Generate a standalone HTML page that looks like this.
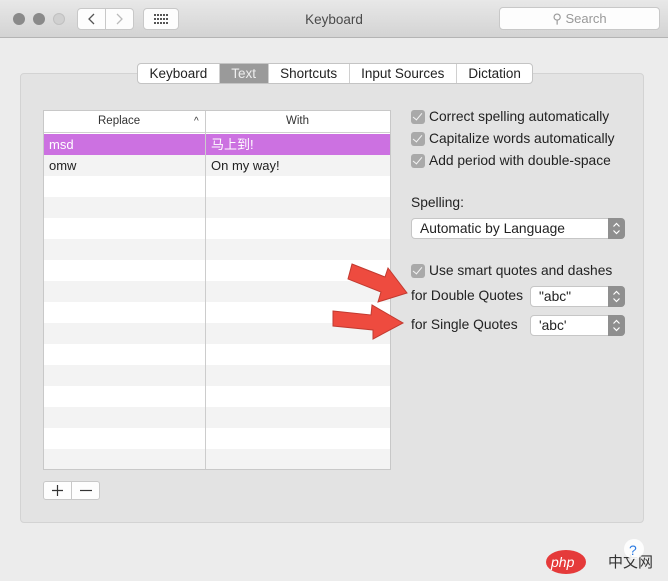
<!DOCTYPE html>
<html><head><meta charset="utf-8"><style>
*{margin:0;padding:0;box-sizing:border-box}
body{width:668px;height:581px;background:#ececec;font-family:"Liberation Sans","Noto Sans CJK SC",sans-serif;font-size:13px;color:#222;position:relative;overflow:hidden}
.abs{position:absolute}
.title{left:0;top:0;width:668px;height:38px;background:linear-gradient(#e8e8e8,#d3d3d3);border-bottom:1px solid #b4b4b4}
.dot{width:12px;height:12px;border-radius:50%;top:13px;background:#8a8a8a}
.btn{background:#fdfdfd;border:1px solid #c8c8c8;border-radius:4px}
.panel{left:20px;top:73px;width:624px;height:450px;background:#e3e3e3;border:1px solid #d3d3d3;border-radius:4px}
.tabs{left:137px;top:63px;height:21px;display:flex;border:1px solid #c4c4c4;border-radius:4px;background:#fff;overflow:hidden}
.tabs div{padding:0 11.5px;line-height:19px;border-right:1px solid #d0d0d0;font-size:13.5px}
.tabs div:last-child{border-right:none}
.tabs .sel{background:#9a9a9a;color:#eee}
.table{left:43px;top:110px;width:348px;height:360px;border:1px solid #c8c8c8;background:#fff}
.row{position:absolute;left:0;width:346px;height:21px;line-height:21px}
.cb{width:14px;height:14px;border-radius:3px;background:#a9a9a9;left:411px}
.cb::after{content:"";position:absolute;left:4px;top:1px;width:4px;height:8px;border:solid #f4f4f4;border-width:0 1.5px 1.5px 0;transform:rotate(40deg)}
.lbl{left:429px;font-size:13.8px}
.pop{background:#fff;border:1px solid #c6c6c6;border-radius:4px;height:21px;line-height:19px;padding-left:8px;font-size:13.8px}
.pop .ar{position:absolute;right:-1px;top:-1px;width:17px;height:21px;background:#8f8f8f;border-radius:0 4px 4px 0}
</style></head><body>
<div class="abs title"></div>
<div class="abs dot" style="left:13px"></div>
<div class="abs dot" style="left:33px"></div>
<div class="abs dot" style="left:53px;background:#d0d0d0;border:1px solid #c0c0c0"></div>
<div class="abs btn" style="left:77px;top:8px;width:57px;height:22px"></div>
<div class="abs" style="left:105px;top:8px;width:1px;height:22px;background:#c8c8c8"></div>
<svg class="abs" style="left:77px;top:8px" width="57" height="22"><path d="M17 6 L12 11 L17 16" stroke="#555" fill="none" stroke-width="1.3"/><path d="M40 6 L45 11 L40 16" stroke="#bbb" fill="none" stroke-width="1.3"/></svg>
<div class="abs btn" style="left:143px;top:8px;width:36px;height:22px"></div>
<svg class="abs" style="left:143px;top:8px" width="36" height="22"><g fill="#555"><rect x="11" y="6" width="2" height="2"/><rect x="14" y="6" width="2" height="2"/><rect x="17" y="6" width="2" height="2"/><rect x="20" y="6" width="2" height="2"/><rect x="23" y="6" width="2" height="2"/><rect x="11" y="10" width="2" height="2"/><rect x="14" y="10" width="2" height="2"/><rect x="17" y="10" width="2" height="2"/><rect x="20" y="10" width="2" height="2"/><rect x="23" y="10" width="2" height="2"/><rect x="11" y="14" width="2" height="2"/><rect x="14" y="14" width="2" height="2"/><rect x="17" y="14" width="2" height="2"/><rect x="20" y="14" width="2" height="2"/><rect x="23" y="14" width="2" height="2"/></g></svg>
<div class="abs" style="left:0;width:668px;top:12px;text-align:center;color:#4a4a4a;font-size:13.5px">Keyboard</div>
<div class="abs btn" style="left:499px;top:7px;width:161px;height:23px;text-align:center;line-height:21px;color:#999;font-size:13px">&#9906; Search</div>
<div class="abs panel"></div>
<div class="abs tabs"><div>Keyboard</div><div class="sel">Text</div><div>Shortcuts</div><div>Input Sources</div><div>Dictation</div></div>
<div class="abs table">
<div class="row" style="top:0;height:22px;border-bottom:1px solid #d0d0d0;font-size:11.5px;color:#333"><span style="position:absolute;left:54px">Replace</span><span style="position:absolute;left:150px;font-size:10px">^</span><span style="position:absolute;left:242px">With</span></div>
<div class="row" style="top:23px;background:#cc71e1;color:#fff"><span style="position:absolute;left:5px">msd</span><span style="position:absolute;left:167px">马上到!</span></div>
<div class="row" style="top:44px;background:#f3f3f3"><span style="position:absolute;left:5px">omw</span><span style="position:absolute;left:167px">On my way!</span></div>
<div class="row" style="top:86px;background:#f3f3f3"></div>
<div class="row" style="top:128px;background:#f3f3f3"></div>
<div class="row" style="top:170px;background:#f3f3f3"></div>
<div class="row" style="top:212px;background:#f3f3f3"></div>
<div class="row" style="top:254px;background:#f3f3f3"></div>
<div class="row" style="top:296px;background:#f3f3f3"></div>
<div class="row" style="top:338px;background:#f3f3f3;height:20px"></div>
<div style="position:absolute;left:161px;top:0;width:1px;height:358px;background:#ccc"></div>
</div>
<div class="abs btn" style="left:43px;top:481px;width:57px;height:19px;border-radius:3px"></div>
<div class="abs" style="left:71px;top:481px;width:1px;height:19px;background:#c8c8c8"></div>
<svg class="abs" style="left:43px;top:481px" width="57" height="19"><path d="M9 9.5H20M14.5 4V15M80 0" stroke="#333" stroke-width="1.2"/><path d="M37 9.5H49" stroke="#333" stroke-width="1.2"/></svg>
<div class="abs cb" style="top:110px"></div><div class="abs lbl" style="top:109px">Correct spelling automatically</div>
<div class="abs cb" style="top:132px"></div><div class="abs lbl" style="top:131px">Capitalize words automatically</div>
<div class="abs cb" style="top:154px"></div><div class="abs lbl" style="top:153px">Add period with double-space</div>
<div class="abs" style="left:411px;top:195px;font-size:13.8px">Spelling:</div>
<div class="abs pop" style="left:411px;top:218px;width:214px">Automatic by Language<div class="ar"><svg width="17" height="21"><path d="M5.5 8.5L8.5 5.5L11.5 8.5M5.5 12.5L8.5 15.5L11.5 12.5" stroke="#fff" fill="none" stroke-width="1.2"/></svg></div></div>
<div class="abs cb" style="top:264px"></div><div class="abs lbl" style="top:263px">Use smart quotes and dashes</div>
<div class="abs" style="left:411px;top:288px;font-size:13.8px">for Double Quotes</div>
<div class="abs pop" style="left:530px;top:286px;width:95px">"abc"<div class="ar"><svg width="17" height="21"><path d="M5.5 8.5L8.5 5.5L11.5 8.5M5.5 12.5L8.5 15.5L11.5 12.5" stroke="#fff" fill="none" stroke-width="1.2"/></svg></div></div>
<div class="abs" style="left:411px;top:317px;font-size:13.8px">for Single Quotes</div>
<div class="abs pop" style="left:530px;top:315px;width:95px">'abc'<div class="ar"><svg width="17" height="21"><path d="M5.5 8.5L8.5 5.5L11.5 8.5M5.5 12.5L8.5 15.5L11.5 12.5" stroke="#fff" fill="none" stroke-width="1.2"/></svg></div></div>
<svg class="abs" style="left:0;top:0" width="668" height="581">
<g fill="#ee4b3f" stroke="#c23a30" stroke-width="1">
<polygon points="352,264 385,277 388,268 407,293 378,302 381,292 348,279"/>
<polygon points="333,311 371,315 372,305 403,323 373,339 373,330 333,326"/>
</g>
<ellipse cx="566" cy="562" rx="20" ry="12" fill="#e53a3a"/>
<text x="551" y="567" fill="#fff" font-size="14" font-style="italic" font-family="Liberation Sans">php</text>
<text x="608" y="567" fill="#333" font-size="15" font-family="Noto Sans CJK SC">中文网</text>
<circle cx="634" cy="549" r="10" fill="#fff" opacity=".9"/>
<text x="629" y="555" fill="#2a7ae2" font-size="14">?</text>
</svg>
</body></html>
